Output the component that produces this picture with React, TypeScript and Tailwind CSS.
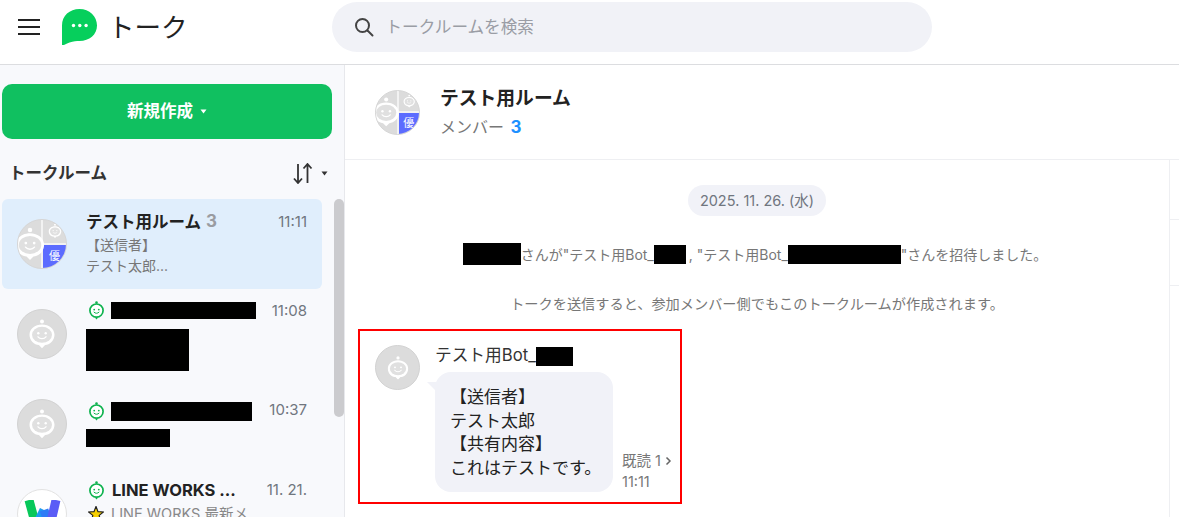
const FONT = "font-['Inter','Noto_Sans_CJK_JP',sans-serif]";

function BotFace({ size = 30, color = "#fff", face = "#e0e0e0" }: { size?: number; color?: string; face?: string }) {
  return (
    <svg width={size} height={size} viewBox="0 0 32 32" fill="none">
      <circle cx="16" cy="3.600" r="2" fill={color} />
      <path d="M16 6.500C8.800 6.500 3.500 11 3.500 16.800s4.800 10.200 9.400 10.200l3.100 3.200 3.100-3.200c4.600 0 9.400-4.400 9.400-10.200S23.200 6.500 16 6.500Z" fill={color} />
      <ellipse cx="16" cy="16.800" rx="10" ry="8" fill={face} />
      <circle cx="12.300" cy="15.200" r="1.200" fill={color} />
      <circle cx="19.700" cy="15.200" r="1.200" fill={color} />
      <path d="M12 18.800c2 2.400 6 2.400 8 0" stroke={color} strokeWidth="1.300" strokeLinecap="round" />
    </svg>
  );
}

function BotBadge() {
  return (
    <svg width="17" height="19" viewBox="0 0 17 19" fill="none" className="shrink-0">
      <circle cx="8.500" cy="1.600" r="1.300" fill="#0fb34f" />
      <circle cx="8.500" cy="9.600" r="6.600" stroke="#0fb34f" strokeWidth="1.700" fill="#fff" />
      <path d="M6.800 16.400h3.400l-1.700 2Z" fill="#0fb34f" />
      <circle cx="6.200" cy="8.600" r="0.900" fill="#0fb34f" />
      <circle cx="10.800" cy="8.600" r="0.900" fill="#0fb34f" />
      <path d="M6 11.200c1.300 1.500 3.700 1.500 5 0" stroke="#0fb34f" strokeWidth="1" strokeLinecap="round" />
    </svg>
  );
}

function GroupAvatar({ size }: { size: number }) {
  return (
    <div
      className="relative shrink-0 rounded-full overflow-hidden bg-[#dcdcdc] border border-[#d6d6d6]"
      style={{ width: size, height: size }}
    >
      <div className="absolute left-1/2 top-0 bottom-0 w-[2px] -ml-px bg-[#f2f2f2]" />
      <div className="absolute left-1/2 right-0 top-1/2 h-[2px] -mt-px bg-[#f2f2f2]" />
      <div className="absolute left-1/2 top-1/2 right-0 bottom-0 ml-px mt-px bg-[#5c6cff] flex items-center justify-center text-white text-[11px] leading-none">
        優
      </div>
      <div className="absolute left-[-6px] top-1/2 -translate-y-1/2">
        <BotFace size={size * 0.72} />
      </div>
      <div className="absolute right-[3px] top-[3px]">
        <BotFace size={size * 0.32} />
      </div>
    </div>
  );
}

function RoundAvatar({ size, face }: { size: number; face: number }) {
  return (
    <div
      className="shrink-0 rounded-full bg-[#dcdcdc] border border-[#d2d2d2] flex items-center justify-center"
      style={{ width: size, height: size }}
    >
      <BotFace size={face} />
    </div>
  );
}

function Caret({ className }: { className: string }) {
  return (
    <svg width="7" height="5" viewBox="0 0 7 5" className={className}>
      <path d="M0.500 0.500h6L3.500 4.500Z" fill="currentColor" />
    </svg>
  );
}

function Redacted({ w, h }: { w: number; h: number }) {
  return <div className="bg-black shrink-0" style={{ width: w, height: h }} />;
}

function RoomRow({ topPad, titleW, titleH, time, timeTop, bodyW, bodyH, bodyGap }: { topPad: number; titleW: number; titleH: number; time: string; timeTop: number; bodyW: number; bodyH: number; bodyGap: number }) {
  return (
    <div className="flex h-[90px] pl-[15px] pr-[15px]">
      <div className="pt-[20px]">
        <RoundAvatar size={50} face={32} />
      </div>
      <div className="ml-[19px] flex-1" style={{ paddingTop: topPad }}>
        <div className="flex items-center h-[20px]">
          <div className="pl-[2px]">
            <BotBadge />
          </div>
          <div className="ml-[6px]">
            <Redacted w={titleW} h={titleH} />
          </div>
          <span className="ml-auto text-[15px] text-[#70767f]" style={{ marginTop: timeTop }}>{time}</span>
        </div>
        <div style={{ marginTop: bodyGap }}>
          <Redacted w={bodyW} h={bodyH} />
        </div>
      </div>
    </div>
  );
}

export default function App() {
  return (
    <div className={`${FONT} w-[1179px] h-[517px] overflow-hidden bg-white flex flex-col text-[#222]`}>
      {/* Header */}
      <header className="h-[65px] shrink-0 border-b border-[#dcdde0] flex items-center">
        <div className="w-[61px] pl-[18px] mt-[-10px] flex flex-col gap-[5px]">
          <span className="block w-[22px] h-[2px] bg-[#222]" />
          <span className="block w-[22px] h-[2px] bg-[#222]" />
          <span className="block w-[22px] h-[2px] bg-[#222]" />
        </div>
        <svg width="37" height="37" viewBox="0 0 37 37" className="mt-[-11px]">
          <path d="M1 17.500C1 7.800 8.600 1 18.500 1S36 8.400 36 17.500 28.400 33 18.500 33c-3 0-6 .1-10 1.600-3 1.100-5.600 2.400-7.500 3.400Z" fill="#06cf5c" />
          <circle cx="12.500" cy="17.500" r="1.700" fill="#fff" />
          <circle cx="18.800" cy="17.500" r="1.700" fill="#fff" />
          <circle cx="25.100" cy="17.500" r="1.700" fill="#fff" />
        </svg>
        <span className="ml-[10px] mt-[-10px] text-[26.500px] leading-none text-[#222]">トーク</span>
        <div className="ml-[144px] mt-[-11px] w-[600px] h-[50px] rounded-full bg-[#f1f2f7] flex items-center pl-[21px]">
          <svg width="22" height="22" viewBox="0 0 22 22" fill="none" stroke="#444" strokeWidth="2" strokeLinecap="round">
            <circle cx="9.500" cy="9.500" r="6.500" />
            <path d="M14.500 14.500 19.500 19.500" />
          </svg>
          <span className="ml-[11px] mt-[1px] text-[16.600px] text-[#9a9da5]">トークルームを検索</span>
        </div>
      </header>

      <div className="flex flex-1 min-h-0">
        {/* Sidebar */}
        <aside className="w-[345px] shrink-0 bg-[#f8f9fc] border-r border-[#e7e8ec] flex">
          <div className="w-[332px] shrink-0 overflow-hidden">
            <div className="pl-[2px] pt-[19px]">
              <button className="w-[330px] h-[55px] rounded-[10px] bg-[#10c060] text-white font-bold text-[16.500px] flex items-center justify-center gap-[7px]">
                新規作成
                <Caret className="text-white" />
              </button>
            </div>
            <div className="flex items-center h-[60px] pt-[8px] pl-[9px] pr-[4px]">
              <span className="font-bold text-[16.500px] text-[#333]">トークルーム</span>
              <svg width="20" height="21" viewBox="0 0 20 21" fill="none" stroke="#333" strokeWidth="1.800" className="ml-auto">
                <path d="M5 1v19M1 15.500 5 20l4-4.500" />
                <path d="M14.500 20V1M10.500 5.500 14.500 1l4 4.500" />
              </svg>
              <Caret className="ml-[8px] text-[#333]" />
            </div>
            <div className="ml-[2px] mr-[10px]">
              <div className="flex h-[90px] rounded-[6px] bg-[#e0eefc] pl-[15px] pr-[15px]">
                <div className="pt-[20px]">
                  <GroupAvatar size={50} />
                </div>
                <div className="ml-[19px] flex-1 pt-[11px]">
                  <div className="flex items-center h-[24px]">
                    <span className="font-bold text-[16.500px] text-[#222]">テスト用ルーム</span>
                    <span className="ml-[5px] font-bold text-[17px] text-[#9a9ca1]">3</span>
                    <span className="ml-auto text-[15px] text-[#70767f]">11:11</span>
                  </div>
                  <div className="text-[14px] leading-[21px] text-[#777]">
                    <div>【送信者】</div>
                    <div>テスト太郎...</div>
                  </div>
                </div>
              </div>
              <RoomRow topPad={11} titleW={145} titleH={17} time="11:08" timeTop={3} bodyW={103} bodyH={42} bodyGap={9} />
              <RoomRow topPad={22} titleW={141} titleH={19} time="10:37" timeTop={-1} bodyW={84} bodyH={18} bodyGap={8} />
              <div className="flex h-[60px] pl-[15px] pr-[15px]">
                <div className="pt-[20px]">
                  <div className="w-[50px] h-[50px] rounded-full bg-white border border-[#e2e2e2] overflow-hidden flex justify-center pt-[10px]">
                    <svg width="38" height="28" viewBox="0 0 38 28" fill="none" strokeWidth="9">
                      <path d="M6 0 13 26" stroke="#08c85a" />
                      <path d="M13 26 21 10" stroke="#1e9bf0" />
                      <path d="M21 10 27 26" stroke="#2e7cf6" />
                      <path d="M27 26 33 0" stroke="#5a5cf6" />
                    </svg>
                  </div>
                </div>
                <div className="ml-[19px] flex-1 pt-[11px]">
                  <div className="flex items-center h-[20px]">
                    <div className="pl-[2px]">
                      <BotBadge />
                    </div>
                    <span className="ml-[7px] font-bold text-[16.500px] text-[#222] whitespace-nowrap">LINE WORKS ...</span>
                    <span className="ml-auto text-[15px] text-[#70767f]">11. 21.</span>
                  </div>
                  <div className="flex items-center mt-[3px] pl-[2px] text-[14.500px] text-[#888] whitespace-nowrap">
                    <svg width="16" height="16" viewBox="0 0 16 16" className="shrink-0">
                      <path d="M8 0.500 10 5.600 15.500 6 11.200 9.400 12.600 15 8 12 3.400 15 4.800 9.400 .5 6 6 5.600Z" fill="#f7d000" stroke="#222" strokeWidth="1.200" />
                    </svg>
                    <span className="ml-[7px]">LINE WORKS 最新メ</span>
                  </div>
                </div>
              </div>
            </div>
          </div>
          <div className="pt-[134px] pl-[2px]">
            <div className="w-[10px] h-[218px] rounded-full bg-[#cbcbce]" />
          </div>
        </aside>

        {/* Chat */}
        <main className="flex-1 min-w-0 flex flex-col">
          <div className="h-[95px] shrink-0 border-b border-[#eeeff2] flex items-center pl-[30px]">
            <GroupAvatar size={45} />
            <div className="ml-[20px]">
              <div className="font-bold text-[18.800px] leading-[26px] text-[#222]">テスト用ルーム</div>
              <div className="text-[16px] leading-[24px] text-[#777] mt-[3px]">
                メンバー <span className="ml-[2px] font-bold text-[17px] text-[#1e90ff]">3</span>
              </div>
            </div>
          </div>
          <div className="flex flex-1 min-h-0">
            <div className="w-[825px] shrink-0 border-r border-[#eeeff2]">
              <div className="flex justify-center pt-[25px]">
                <span className="h-[31px] px-[11.500px] rounded-full bg-[#f1f2f8] text-[14.500px] leading-[31px] text-[#70767f]">2025. 11. 26. (水)</span>
              </div>
              <div className="mt-[25px] pr-[4px] flex justify-center items-center h-[26px] text-[14px] text-[#777] whitespace-nowrap">
                <Redacted w={58} h={22} />
                <span>さんが"テスト用Bot_</span>
                <Redacted w={32} h={19} />
                <span className="ml-[3px]">, "テスト用Bot_</span>
                <Redacted w={113} h={19} />
                <span>"さんを招待しました。</span>
              </div>
              <div className="mt-[24px] text-center text-[14.200px] leading-[26px] text-[#777] whitespace-nowrap">
                トークを送信すると、参加メンバー側でもこのトークルームが作成されます。
              </div>
              {/* Highlight marked in the screenshot */}
              <div className="ml-[13px] mt-[12px] w-[324px] h-[175px] border-2 border-[#f00] flex pl-[15px] pt-[14px]">
                <RoundAvatar size={45} face={26} />
                <div className="ml-[15px]">
                  <div className="flex items-center h-[22px] text-[16.700px] text-[#333]">
                    テスト用Bot_
                    <Redacted w={37} h={19} />
                  </div>
                  <div className="flex items-end mt-[5px]">
                    <div className="relative w-[178px] h-[120px] rounded-[16px] bg-[#f1f2f8] pl-[15px] pt-[14px] text-[17px] leading-[23.500px] text-[#222]">
                      <span className="absolute left-[-8px] top-[10px] w-0 h-0 border-t-[10px] border-t-[#f1f2f8] border-l-[10px] border-l-transparent" />
                      <div>【送信者】</div>
                      <div>テスト太郎</div>
                      <div>【共有内容】</div>
                      <div>これはテストです。</div>
                    </div>
                    <div className="ml-[9px] text-[14.500px] leading-[21px] text-[#777] whitespace-nowrap">
                      <div className="flex items-center gap-[4px]">
                        既読 1
                        <svg width="7" height="10" viewBox="0 0 7 10" fill="none" stroke="#666" strokeWidth="1.500">
                          <path d="M1.500 1.500 5 5 1.500 8.500" />
                        </svg>
                      </div>
                      <div>11:11</div>
                    </div>
                  </div>
                </div>
              </div>
            </div>
            {/* Right rail */}
            <div className="flex-1 flex flex-col">
              <div className="h-[60px] border-b border-[#eeeff2]" />
              <div className="h-[66px] border-b border-[#eeeff2]" />
            </div>
          </div>
        </main>
      </div>
    </div>
  );
}
